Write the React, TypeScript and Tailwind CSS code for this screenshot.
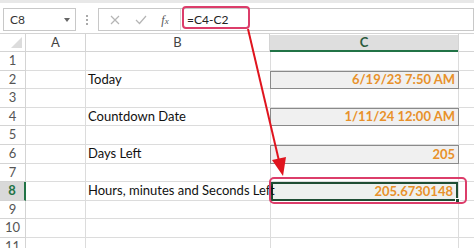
import React from "react";

const rows = [1, 2, 3, 4, 5, 6, 7, 8, 9, 10, 11];

const bText: Record<number, string> = {
  2: "Today",
  4: "Countdown Date",
  6: "Days Left",
  8: "Hours, minutes and Seconds Left",
};
const cText: Record<number, string> = {
  2: "6/19/23 7:50 AM",
  4: "1/11/24 12:00 AM",
  6: "205",
  8: "205.6730148",
};

export default function App() {
  return (
    <div
      className="relative w-[474px] h-[248px] overflow-hidden bg-white text-[#222]"
      style={{ fontFamily: "Lato, 'Liberation Sans', sans-serif" }}
    >
      {/* top strip */}
      <div className="h-[3px] bg-[#e8e8e8]" />
      {/* formula bar */}
      <div className="h-[30px] flex items-start pt-[5px] bg-white">
        <div className="ml-[3px] w-[73px] h-[23px] border border-[#c8c8c8] flex items-center justify-between pl-[6px] pr-[5px] text-[12px] text-[#333]">
          <span>C8</span>
          <span className="w-0 h-0 border-l-[3px] border-r-[3px] border-t-[4px] border-l-transparent border-r-transparent border-t-[#666]" />
        </div>
        <div className="w-[22px] h-[23px] flex flex-col items-center justify-center gap-[2px]">
          <span className="w-[2px] h-[2px] bg-[#aaa]" />
          <span className="w-[2px] h-[2px] bg-[#aaa]" />
          <span className="w-[2px] h-[2px] bg-[#aaa]" />
        </div>
        <div className="flex-1 h-[23px] border border-[#c8c8c8] flex items-center">
          <div className="w-[81px] h-full flex items-center justify-around pl-[4px] pr-[4px]">
            <svg width="10" height="10" viewBox="0 0 10 10">
              <path d="M1 1 L9 9 M9 1 L1 9" stroke="#b5b5b5" strokeWidth="1.2" />
            </svg>
            <svg width="12" height="10" viewBox="0 0 12 10">
              <path d="M1 5 L4.5 8.5 L11 1" stroke="#b5b5b5" strokeWidth="1.2" fill="none" />
            </svg>
            <span
              className="text-[12px] italic text-[#555]"
              style={{ fontFamily: "'Liberation Serif', serif" }}
            >
              f<span className="text-[9px]">x</span>
            </span>
          </div>
          <div className="h-full border-l border-[#d8d8d8] flex items-center pl-[6px] text-[12px] text-[#222]">
            =C4-C2
          </div>
        </div>
      </div>
      {/* column header */}
      <div className="h-[19px] flex border-t border-[#d4d4d4] text-[13px] text-[#444]">
        <div className="w-[26px] h-full border-r border-b border-[#d4d4d4] relative">
          <svg className="absolute right-[3px] bottom-[3px]" width="11" height="11" viewBox="0 0 11 11">
            <path d="M11 0 L11 11 L0 11 Z" fill="#dcdcdc" />
          </svg>
        </div>
        <div className="w-[60px] h-full border-r border-b border-[#d4d4d4] flex items-center justify-center">A</div>
        <div className="w-[184px] h-full border-r border-b border-[#d4d4d4] flex items-center justify-center">B</div>
        <div className="w-[188px] h-[17px] mt-[1px] bg-[#dedede] border-b-2 border-[#217346] flex items-center justify-center font-bold text-[#2b5a3c]">
          C
        </div>
        <div className="flex-1 h-full border-l border-b border-[#d4d4d4]" />
      </div>
      {/* grid rows */}
      {rows.map((r) => {
        const isSel = r === 8;
        const hasC = !!cText[r];
        return (
          <div key={r} className="h-[18.6px] flex text-[13px]">
            <div
              className={
                isSel
                  ? "w-[26px] h-full bg-[#d9d9d9] border-r-2 border-[#217346] border-b border-b-[#d4d4d4] flex items-center justify-center font-bold text-[#217346]"
                  : "w-[26px] h-full border-r border-b border-[#d4d4d4] flex items-center justify-center text-[#555]"
              }
            >
              {r}
            </div>
            <div className="w-[60px] h-full border-r border-b border-[#dcdcdc]" />
            <div className="w-[184px] h-full border-b border-[#dcdcdc] flex items-center pl-[2px] whitespace-nowrap overflow-visible text-[#111] z-10">
              {bText[r] ?? ""}
            </div>
            <div className="w-[188px] h-full border-l border-b border-[#dcdcdc] relative">
              {hasC && (
                <div
                  className={
                    isSel
                      ? "absolute inset-x-0 top-0 bottom-[-1px] border-2 border-[#1f4d33] bg-[#eef0ee] flex items-center justify-end pr-[3px] font-bold text-[#e8912a]"
                      : "absolute inset-x-[-1px] top-0 bottom-[-1px] border border-[#8a8a8a] bg-[#f0f0f0] flex items-center justify-end pr-[3px] font-bold text-[#e8912a]"
                  }
                >
                  {cText[r]}
                  {isSel && (
                    <span className="absolute right-[-4px] bottom-[-4px] w-[5px] h-[5px] bg-[#1f4d33] border border-white" />
                  )}
                </div>
              )}
            </div>
            <div className="flex-1 h-full border-b border-l border-[#dcdcdc]" />
          </div>
        );
      })}

      {/* pink highlight around formula */}
      <div className="absolute left-[182px] top-[6px] w-[68px] h-[23px] border-[2.5px] border-[#dc3d6a] rounded-[4px]" />
      {/* pink highlight around C8 */}
      <div className="absolute left-[269px] top-[177px] w-[198px] h-[27px] border-[2.5px] border-[#dc3d6a] rounded-[5px] z-20" />
      {/* arrow */}
      <svg className="absolute left-0 top-0 z-30" width="474" height="248" viewBox="0 0 474 248">
        <line x1="248" y1="29" x2="279.5" y2="163" stroke="#e0141e" strokeWidth="2" />
        <path d="M272 160 L283 176 L286 157 Z" fill="#e0141e" />
      </svg>
    </div>
  );
}
